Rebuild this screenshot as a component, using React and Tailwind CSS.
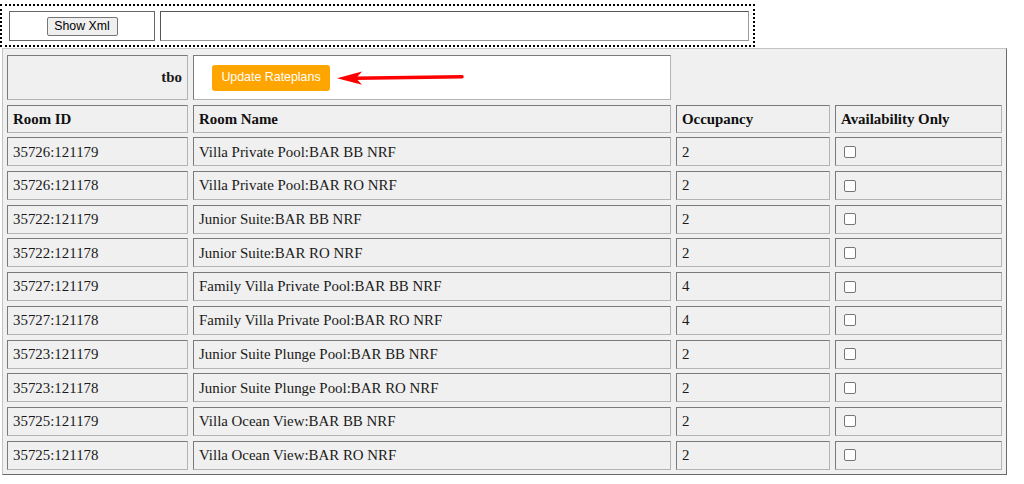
import React from "react";

// ===================== Data =====================
const ROOMS = [
  { id: "35726:121179", name: "Villa Private Pool:BAR BB NRF", occ: 2 },
  { id: "35726:121178", name: "Villa Private Pool:BAR RO NRF", occ: 2 },
  { id: "35722:121179", name: "Junior Suite:BAR BB NRF", occ: 2 },
  { id: "35722:121178", name: "Junior Suite:BAR RO NRF", occ: 2 },
  { id: "35727:121179", name: "Family Villa Private Pool:BAR BB NRF", occ: 4 },
  { id: "35727:121178", name: "Family Villa Private Pool:BAR RO NRF", occ: 4 },
  { id: "35723:121179", name: "Junior Suite Plunge Pool:BAR BB NRF", occ: 2 },
  { id: "35723:121178", name: "Junior Suite Plunge Pool:BAR RO NRF", occ: 2 },
  { id: "35725:121179", name: "Villa Ocean View:BAR BB NRF", occ: 2 },
  { id: "35725:121178", name: "Villa Ocean View:BAR RO NRF", occ: 2 },
];

// inset cell border, like an old-school border="1" table
const cell =
  "border border-t-[#7a7a7a] border-l-[#7a7a7a] border-r-[#b4b4b4] border-b-[#b4b4b4] bg-[#f0f0f0] flex items-center";

function Arrow() {
  return (
    <svg width="130" height="16" viewBox="0 0 130 16" className="ml-[5px]">
      <line
        x1="20"
        y1="8.2"
        x2="127"
        y2="6.8"
        stroke="#ff0000"
        strokeWidth="3.5"
        strokeLinecap="round"
      />
      <polygon points="2,8.2 27,1.5 21,8.2 27,14.8" fill="#ff0000" />
    </svg>
  );
}

export default function App() {
  return (
    <div className="bg-white min-h-screen pt-[4px] font-['Liberation_Serif',serif] text-[14.9px] text-[#1a1a1a]">
      {/* ===== xml toolbar ===== */}
      <div className="w-[755px] h-[43px] border-2 border-dotted border-black flex gap-[5px] pl-[7px] pr-[4px] pt-[5px] pb-[4px]">
        <div className="w-[146px] h-[30px] border border-[#666] bg-white flex items-center justify-center">
          <button className="h-[19px] w-[71px] bg-[#efefef] border border-[#767676] rounded-[2px] font-['Liberation_Sans',Arial,sans-serif] text-[12.3px] text-black leading-none">
            Show Xml
          </button>
        </div>
        <div className="flex-1 h-[30px] border border-t-[#555] border-l-[#555] border-r-[#9a9a9a] border-b-[#9a9a9a] bg-white" />
      </div>

      {/* ===== rateplan table ===== */}
      <div className="ml-[2px] mt-[1px] w-[1005px] border border-t-[#c4c4c4] border-l-[#c4c4c4] border-r-[#6b6b6b] border-b-[#6b6b6b] bg-[#f0f0f0] grid grid-cols-[181px_478px_154px_167px] grid-rows-[45px_28px_repeat(10,29px)] gap-x-[5px] gap-y-[4.7px] pl-[4px] pr-[4px] pt-[6px] pb-[4.7px]">
        <div className={`${cell} justify-end pr-[5px] font-bold`}>tbo</div>
        <div className={`${cell} !bg-white pl-[18px]`}>
          <button className="h-[26px] w-[118px] bg-[#ffa500] rounded-[3px] text-white font-['Liberation_Sans',Arial,sans-serif] text-[12.4px] leading-none">
            Update Rateplans
          </button>
          <Arrow />
        </div>
        <div />
        <div />

        <div className={`${cell} pl-[5px] font-bold text-[#111]`}>Room ID</div>
        <div className={`${cell} pl-[5px] font-bold text-[#111]`}>Room Name</div>
        <div className={`${cell} pl-[5px] font-bold text-[#111]`}>Occupancy</div>
        <div className={`${cell} pl-[5px] font-bold text-[#111]`}>
          Availability Only
        </div>

        {ROOMS.map((r) => (
          <React.Fragment key={r.id + r.name}>
            <div className={`${cell} pl-[5px]`}>{r.id}</div>
            <div className={`${cell} pl-[5px]`}>{r.name}</div>
            <div className={`${cell} pl-[5px]`}>{r.occ}</div>
            <div className={`${cell} pl-[8px]`}>
              <input
                type="checkbox"
                className="appearance-none w-[12px] h-[12px] border border-[#767676] rounded-[2px] bg-white"
              />
            </div>
          </React.Fragment>
        ))}
      </div>
    </div>
  );
}
